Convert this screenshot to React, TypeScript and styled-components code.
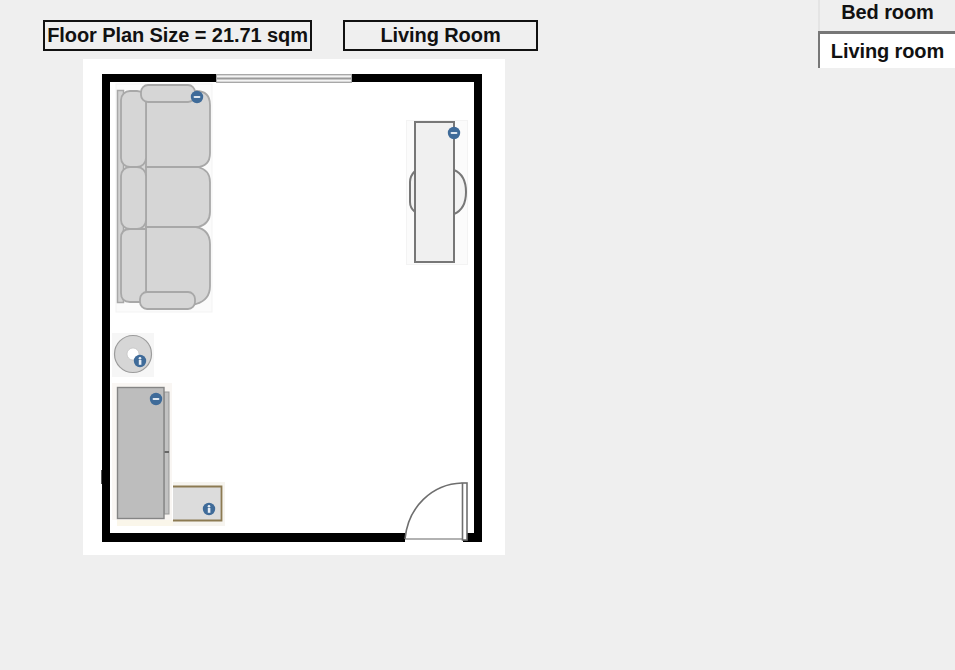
import React from 'react';
import styled, { createGlobalStyle } from 'styled-components';

const GlobalStyle = createGlobalStyle`
  html, body {
    margin: 0;
    padding: 0;
    height: 100%;
    background-color: #efefef;
    font-family: "Liberation Sans", Arial, sans-serif;
  }
`;

const Page = styled.div`
  display: flex;
  justify-content: space-between;
  align-items: flex-start;
  width: 955px;
  height: 670px;
  overflow: hidden;
  background-color: #efefef;
`;

const Workspace = styled.div`
  display: flex;
  flex-direction: column;
  padding: 20px 0 0 43px;
`;

const LabelRow = styled.div`
  display: flex;
  gap: 31px;
`;

const Label = styled.div<{ $width: number }>`
  box-sizing: border-box;
  width: ${props => props.$width}px;
  height: 31px;
  border: 2px solid #111;
  font-size: 20px;
  font-weight: 700;
  letter-spacing: -0.08px;
  line-height: 26px;
  text-align: center;
  white-space: nowrap;
  color: #111;
`;

const PlanSheet = styled.svg`
  display: block;
  width: 422px;
  height: 496px;
  margin: 8px 0 0 40px;
  background-color: #fff;
`;

const RoomTabs = styled.div`
  display: flex;
  flex-direction: column;
  width: 137px;
`;

const RoomTab = styled.button<{ $active?: boolean }>`
  box-sizing: border-box;
  width: 137px;
  height: ${props => (props.$active ? 37 : 31)}px;
  padding: ${props => (props.$active ? '1px 0 0' : '0 0 6px')};
  border: none;
  border-left: 2px solid ${props => (props.$active ? '#777' : '#e4e4e4')};
  border-top: ${props => (props.$active ? '3px solid #777' : 'none')};
  background-color: ${props => (props.$active ? '#fff' : '#efefef')};
  font-family: inherit;
  font-size: 20px;
  font-weight: 700;
  letter-spacing: -0.1px;
  color: #111;
  cursor: pointer;
`;

const WALL = '#000';
const CUSHION = '#d6d6d6';
const CUSHION_EDGE = '#a8a8a8';
const GHOST = '#f3f3f3';

const Badge: React.FC<{ x: number; y: number; kind: 'info' | 'size' }> = ({ x, y, kind }) => (
  <g>
    <circle cx={x} cy={y} r={6.2} fill="#3f6b99" />
    {kind === 'info' ? (
      <>
        <circle cx={x} cy={y - 2.8} r={1.3} fill="#e8eef5" />
        <rect x={x - 1.2} y={y - 1} width={2.6} height={4.8} fill="#e8eef5" />
      </>
    ) : (
      <rect x={x - 3.4} y={y - 0.9} width={6.8} height={1.8} rx={0.9} fill="#dfe7f0" />
    )}
  </g>
);

const Sofa: React.FC = () => (
  <g stroke={CUSHION_EDGE} strokeWidth={1.8} fill={CUSHION}>
    <rect x={116} y={84} width={96} height={228} fill="#fbfbfb" stroke={GHOST} strokeWidth={1} />
    <rect x={117.5} y={90.5} width={6} height={212} fill="#d2d2d2" strokeWidth={1.5} />
    <rect x={124} y={95} width={22} height={204} stroke="none" />
    <path d="M146 91 H196 Q210 91 210 105 V153 Q210 167 196 167 H146 Z" />
    <path d="M146 167 H198 Q210 170 210 182 V212 Q210 224 198 227 H146 Z" />
    <path d="M146 227 H196 Q210 230 210 244 V286 Q210 300 196 304 H146 Z" />
    <rect x={121} y={91} width={25} height={76} rx={9} />
    <rect x={121} y={167} width={25} height={62} rx={9} />
    <path d="M130 229 H146 V302 H130 Q121 302 121 293 V238 Q121 229 130 229 Z" />
    <rect x={141} y={85} width={54} height={17} rx={7} />
    <rect x={140} y={292} width={55} height={17} rx={7} />
  </g>
);

const Desk: React.FC = () => (
  <g stroke="#777" strokeWidth={2}>
    <rect x={406.5} y={120.5} width={61} height={144} fill="#fbfbfb" stroke={GHOST} strokeWidth={1} />
    <path d="M415 171 Q410 176 410 182 V202 Q410 208 415 212" fill="#f3f3f3" />
    <path d="M454 170 Q466 175 466 192 Q466 209 454 214" fill="#f3f3f3" />
    <rect x={415} y={122} width={39} height={140} fill="#f0f0f0" />
  </g>
);

const RoundTable: React.FC = () => (
  <g>
    <rect x={112} y={333} width={42} height={44} fill="#f6f6f6" />
    <circle cx={133} cy={354} r={18.5} fill="#d6d6d6" stroke="#9c9c9c" strokeWidth={1.2} />
    <circle cx={133} cy={354} r={6} fill="#fff" stroke="#bbb" strokeWidth={0.6} />
  </g>
);

const Cabinet: React.FC = () => (
  <g>
    <rect x={112} y={383} width={60} height={137} fill="#f9f6f3" />
    <rect x={117} y={520} width={108} height={6} fill="#faf6ea" />
    <rect x={173} y={482} width={52} height={44} fill="#f6f4ef" />
    <rect x={164} y={392} width={5} height={122} fill="#c2c2c2" stroke="#999" strokeWidth={1} />
    <rect x={164} y={451} width={5} height={2} fill="#666" />
    <rect x={117.5} y={387.5} width={46.5} height={131} fill="#bdbdbd" stroke="#858585" strokeWidth={1.4} />
    <rect x={173} y={486} width={49} height={35} fill="#dcdcdc" />
    <path d="M173 486.5 H221.5 V520.5 H173" fill="none" stroke="#8c7a52" strokeWidth={1.8} />
  </g>
);

const Walls: React.FC = () => (
  <g fill={WALL}>
    <rect x={102} y={74} width={114} height={8} />
    <rect x={352} y={74} width={130} height={8} />
    <rect x={102} y={74} width={8} height={468} />
    <rect x={474} y={74} width={8} height={468} />
    <rect x={102} y={533} width={303} height={9} />
    <rect x={463} y={533} width={19} height={9} />
    <rect x={101} y={470} width={1} height={14} fill="#555" />
  </g>
);

const Window: React.FC = () => (
  <g>
    <rect x={216.5} y={74.5} width={135} height={8} fill="#d8d8d8" stroke="#a8a8a8" strokeWidth={1} />
    <rect x={217} y={76} width={134} height={1.5} fill="#f4f4f4" />
    <rect x={217} y={79.5} width={134} height={1.5} fill="#f4f4f4" />
    <rect x={217} y={77.6} width={134} height={1.8} fill="#9a9a9a" />
  </g>
);

const Door: React.FC = () => (
  <g fill="none" stroke="#6e6e6e" strokeWidth={1.6}>
    <path d="M405 539 H463" stroke="#999" />
    <path d="M405 539 C408 507 432 484 462 483" />
    <rect x={462.5} y={483} width={4.5} height={57} fill="#fff" />
  </g>
);

const App: React.FC = () => {
  return (
    <Page>
      <GlobalStyle />
      <Workspace>
        <LabelRow>
          <Label $width={269}>Floor Plan Size = 21.71 sqm</Label>
          <Label $width={195}>Living Room</Label>
        </LabelRow>
        <PlanSheet viewBox="83 59 422 496">
          <Walls />
          <Window />
          <Door />
          <Sofa />
          <Desk />
          <RoundTable />
          <Cabinet />
          <Badge x={197} y={97} kind="size" />
          <Badge x={454} y={133} kind="size" />
          <Badge x={156} y={399} kind="size" />
          <Badge x={140} y={361} kind="info" />
          <Badge x={209} y={509} kind="info" />
        </PlanSheet>
      </Workspace>
      <RoomTabs>
        <RoomTab>Bed room</RoomTab>
        <RoomTab $active>Living room</RoomTab>
      </RoomTabs>
    </Page>
  );
};

export default App;
